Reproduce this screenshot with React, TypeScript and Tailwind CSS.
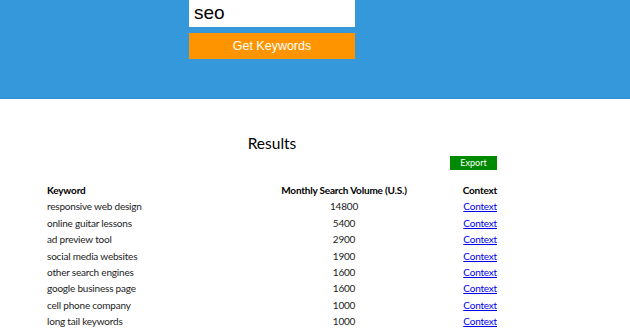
import React from 'react'

interface KeywordRow {
  keyword: string
  volume: number
}

const rows: KeywordRow[] = [
  { keyword: 'responsive web design', volume: 14800 },
  { keyword: 'online guitar lessons', volume: 5400 },
  { keyword: 'ad preview tool', volume: 2900 },
  { keyword: 'social media websites', volume: 1900 },
  { keyword: 'other search engines', volume: 1600 },
  { keyword: 'google business page', volume: 1600 },
  { keyword: 'cell phone company', volume: 1000 },
  { keyword: 'long tail keywords', volume: 1000 }
]

const App: React.FC = () => {
  return (
    <div className="w-[630px] h-[333px] overflow-hidden bg-white font-['Lato',sans-serif]">
      {/* search header */}
      <div className="w-full h-[99px] bg-[#3498db] border-b border-[#2d8fd3]">
        <div className="w-[544px] flex flex-col items-center">
          <div className="w-[166px] h-[27px] bg-white flex items-center pl-[5px] text-[19px] text-black font-['Liberation_Sans',sans-serif]">
            seo
          </div>
          <button className="mt-[6px] w-[166px] h-[26px] bg-[#fe9500] text-white text-[12.5px] font-['Liberation_Sans',sans-serif]">
            Get Keywords
          </button>
        </div>
      </div>

      {/* results */}
      <div className="w-[544px] flex flex-col items-center">
        <h2 className="mt-[32px] text-[15.5px] leading-[24px] text-black">Results</h2>
        <div className="w-[450px] flex justify-end mt-[1px]">
          <button className="w-[47px] h-[14px] bg-[#008a00] text-white text-[9px] leading-[14px]">
            Export
          </button>
        </div>
        <div className="w-[450px] mt-[12px] text-[10px] tracking-[-0.2px] text-[#222]">
          <div className="grid grid-cols-[217px_160px_73px] leading-[16.4px] font-bold text-black whitespace-nowrap">
            <span>Keyword</span>
            <span className="text-center">Monthly Search Volume (U.S.)</span>
            <span className="text-right">Context</span>
          </div>
          {rows.map((row, i) => (
            <div key={i} className="grid grid-cols-[217px_160px_73px] leading-[16.4px]">
              <span>{row.keyword}</span>
              <span className="text-center">{row.volume}</span>
              <span className="text-right">
                <a href="#" className="text-[#0000ee] underline">
                  Context
                </a>
              </span>
            </div>
          ))}
        </div>
      </div>
    </div>
  )
}

export default App
